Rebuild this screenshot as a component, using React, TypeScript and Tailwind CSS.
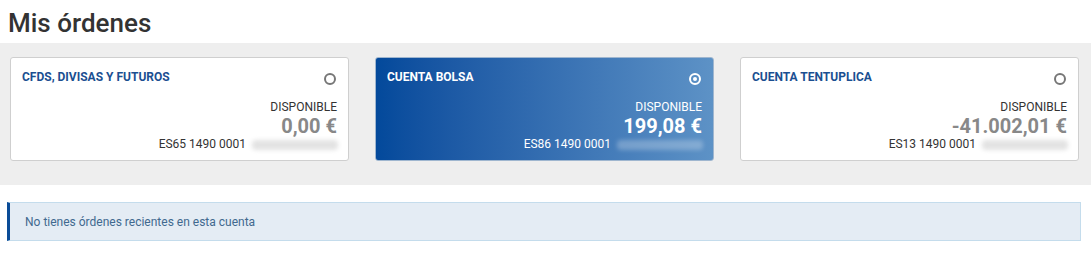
import React from "react";

interface Account {
  name: string;
  amount: string;
  iban: string;
  selected?: boolean;
}

const ACCOUNTS: Account[] = [
  { name: "CFDS, DIVISAS Y FUTUROS", amount: "0,00 €", iban: "ES65 1490 0001" },
  { name: "CUENTA BOLSA", amount: "199,08 €", iban: "ES86 1490 0001", selected: true },
  { name: "CUENTA TENTUPLICA", amount: "-41.002,01 €", iban: "ES13 1490 0001" },
];

function AccountCard({ name, amount, iban, selected }: Account) {
  return (
    <div
      className={
        selected
          ? "flex h-[104px] w-[339px] flex-col rounded-[3px] border border-[#9fb6cf] bg-gradient-to-r from-[#03499b] to-[#5d92c6] pl-[11px] pr-[11px] pt-[12px] text-white"
          : "flex h-[104px] w-[339px] flex-col rounded-[3px] border border-[#cfcfcf] bg-white pl-[11px] pr-[11px] pt-[12px] text-[#333]"
      }
    >
      <div className="flex items-start justify-between">
        <span
          className={
            selected
              ? "text-[12px] font-bold leading-[14px] text-white"
              : "text-[12px] font-bold leading-[14px] text-[#1b4f91]"
          }
        >
          {name}
        </span>
        {selected ? (
          <span className="mr-[1px] mt-[3px] flex h-[12px] w-[12px] items-center justify-center rounded-full border-2 border-white">
            <span className="h-[4px] w-[4px] rounded-full bg-white" />
          </span>
        ) : (
          <span className="mr-[1px] mt-[3px] h-[12px] w-[12px] rounded-full border-2 border-[#777]" />
        )}
      </div>
      <div className="mt-[15px] text-right text-[12px] leading-[15px]">DISPONIBLE</div>
      <div
        className={
          selected
            ? "text-right text-[20px] font-bold leading-[22px] text-white"
            : "text-right text-[20px] font-bold leading-[22px] text-[#888]"
        }
      >
        {amount}
      </div>
      <div className="flex items-center justify-end gap-[6px] text-[12px] leading-[15px]">
        <span>{iban}</span>
        <span
          className={
            selected
              ? "mr-[-1px] h-[10px] w-[86px] rounded-sm bg-white/25 blur-[2px]"
              : "mr-[-1px] h-[10px] w-[86px] rounded-sm bg-[#e3e3e3] blur-[2px]"
          }
        />
      </div>
    </div>
  );
}

export default function App() {
  return (
    <div className="h-[277px] w-[1091px] bg-white font-['Roboto',sans-serif]">
      <h1 className="px-[8px] pt-[3px] text-[26px] font-medium leading-[40px] text-[#333]">Mis órdenes</h1>
      <div className="flex h-[142px] gap-[26px] bg-[#eeeeee] pl-[10px] pt-[14px]">
        {ACCOUNTS.map((a) => (
          <AccountCard key={a.name} {...a} />
        ))}
      </div>
      <div className="ml-[7px] mt-[17px] flex h-[39px] w-[1074px] items-center border border-l-[3px] border-[#c4dcec] border-l-[#0a4c97] bg-[#e4ecf4] pl-[15px] text-[12px] text-[#41698f]">
        No tienes órdenes recientes en esta cuenta
      </div>
    </div>
  );
}
